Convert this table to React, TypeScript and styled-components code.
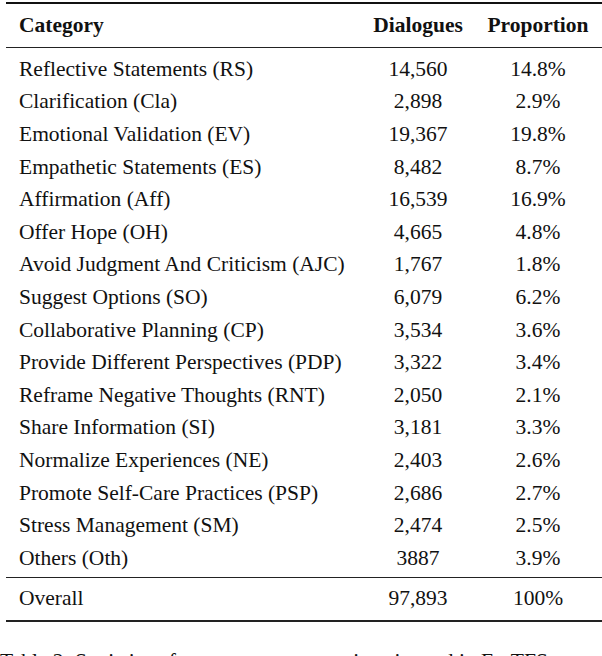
import React from "react";
import styled, { createGlobalStyle } from "styled-components";

const Global = createGlobalStyle`
  html, body { margin: 0; padding: 0; background: #fff; overflow: hidden; }
  body { font-family: "Liberation Serif", "Times New Roman", serif; color: #111; }
`;

const Page = styled.div`
  width: 602px;
  height: 656px;
  overflow: hidden;
  padding-top: 2px;
  box-sizing: border-box;
`;

const Table = styled.div`
  margin-left: 6px;
  width: 600px;
  border-top: 2px solid #111;
  border-bottom: 2px solid #222;
`;

const Grid = styled.div<{ $bold?: boolean; $h: number }>`
  display: grid;
  grid-template-columns: 352px 100px 120px;
  column-gap: 10px;
  align-items: center;
  height: ${(p) => p.$h}px;
  font-size: 21.5px;
  font-weight: ${(p) => (p.$bold ? 700 : 400)};
`;

const Section = styled.div<{ $pt: number; $pb: number; $rule?: boolean }>`
  padding: ${(p) => p.$pt}px 0 ${(p) => p.$pb}px;
  border-bottom: ${(p) => (p.$rule ? "1px solid #222" : "none")};
`;

const Cat = styled.div`
  padding-left: 13px;
  white-space: nowrap;
`;

const Num = styled.div`
  text-align: center;
  white-space: nowrap;
`;

const Caption = styled.div`
  margin-top: 27px;
  font-size: 21.5px;
  white-space: nowrap;
`;

const rows: [string, string, string][] = [
  ["Reflective Statements (RS)", "14,560", "14.8%"],
  ["Clarification (Cla)", "2,898", "2.9%"],
  ["Emotional Validation (EV)", "19,367", "19.8%"],
  ["Empathetic Statements (ES)", "8,482", "8.7%"],
  ["Affirmation (Aff)", "16,539", "16.9%"],
  ["Offer Hope (OH)", "4,665", "4.8%"],
  ["Avoid Judgment And Criticism (AJC)", "1,767", "1.8%"],
  ["Suggest Options (SO)", "6,079", "6.2%"],
  ["Collaborative Planning (CP)", "3,534", "3.6%"],
  ["Provide Different Perspectives (PDP)", "3,322", "3.4%"],
  ["Reframe Negative Thoughts (RNT)", "2,050", "2.1%"],
  ["Share Information (SI)", "3,181", "3.3%"],
  ["Normalize Experiences (NE)", "2,403", "2.6%"],
  ["Promote Self-Care Practices (PSP)", "2,686", "2.7%"],
  ["Stress Management (SM)", "2,474", "2.5%"],
  ["Others (Oth)", "3887", "3.9%"],
];

export default function App() {
  return (
    <Page>
      <Global />
      <Table>
        <Section $pt={0} $pb={0} $rule>
          <Grid $bold $h={43}>
            <Cat>Category</Cat>
            <Num>Dialogues</Num>
            <Num>Proportion</Num>
          </Grid>
        </Section>
        <Section $pt={5} $pb={2} $rule>
          {rows.map(([c, d, p]) => (
            <Grid key={c} $h={32.6}>
              <Cat>{c}</Cat>
              <Num>{d}</Num>
              <Num>{p}</Num>
            </Grid>
          ))}
        </Section>
        <Section $pt={0} $pb={0}>
          <Grid $h={42}>
            <Cat>Overall</Cat>
            <Num>97,893</Num>
            <Num>100%</Num>
          </Grid>
        </Section>
      </Table>
      <Caption>Table 2: Statistics of summary across various is used in EmTFS.</Caption>
    </Page>
  );
}
